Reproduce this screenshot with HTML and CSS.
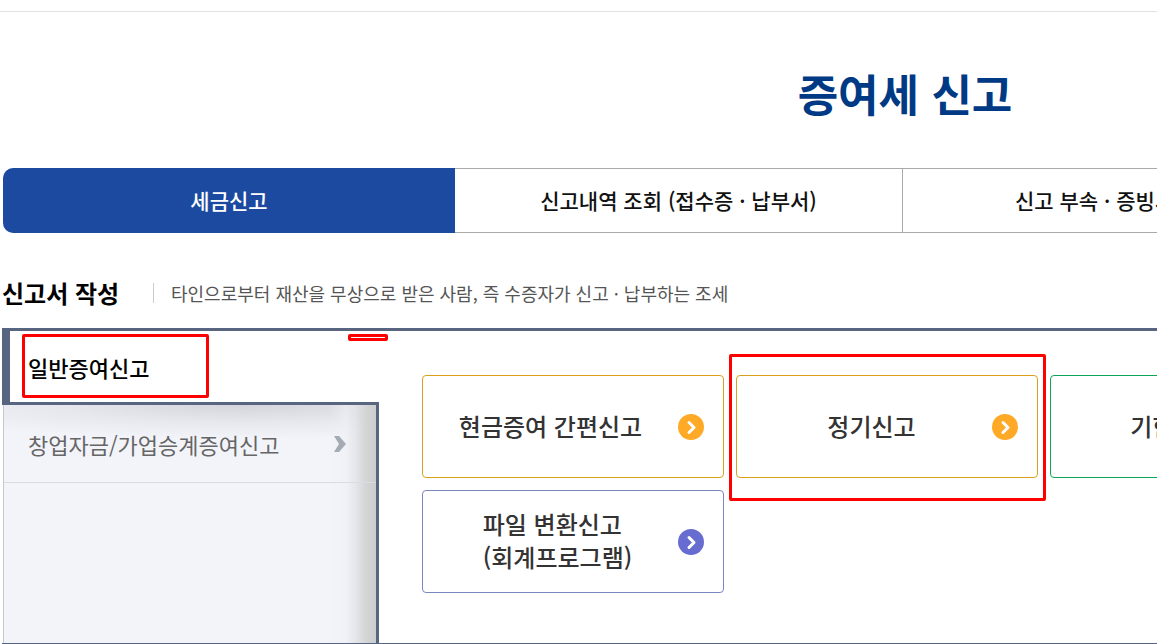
FILE: index.html
```
<!DOCTYPE html>
<html lang="ko">
<head>
<meta charset="UTF-8">
<title>증여세 신고</title>
<link rel="stylesheet" href="styles.css">
</head>
<body>

<div class="wrap">
	<h1 class="page-title">증여세 신고</h1>

	<nav class="tabs">
		<a href="#" class="tab active">세금신고</a>
		<a href="#" class="tab">신고내역 조회 (접수증 · 납부서)</a>
		<a href="#" class="tab">신고 부속 · 증빙서류 제출</a>
	</nav>

	<div class="section-head">
		<h2>신고서 작성</h2>
		<p>타인으로부터 재산을 무상으로 받은 사람, 즉 수증자가 신고 · 납부하는 조세</p>
	</div>

	<div class="panel">
		<div class="side">
			<a href="#" class="side-item active">일반증여신고</a>
			<div class="side-rest">
				<a href="#" class="side-item">
					창업자금/가업승계증여신고
					<svg class="side-arrow" width="14" height="16" viewBox="0 0 14 16"><path d="M1 0h5l7 8-7 8H1l5-8z" fill="#a5abb5"/></svg>
				</a>
			</div>
			<span class="mark mark-side"></span>
			<span class="mark mark-small"></span>
		</div>

		<div class="cards">
			<button type="button" class="card orange">
				<span class="card-name">현금증여 간편신고</span>
				<svg class="card-arrow" viewBox="0 0 26 26"><circle cx="13" cy="13" r="13"/><path d="M11 8.5l5 5-5 5"/></svg>
			</button>
			<div class="card-box">
				<button type="button" class="card orange short">
					<span class="card-name">정기신고</span>
					<svg class="card-arrow" viewBox="0 0 26 26"><circle cx="13" cy="13" r="13"/><path d="M11 8.5l5 5-5 5"/></svg>
				</button>
				<span class="mark mark-card"></span>
			</div>
			<button type="button" class="card green short">
				<span class="card-name">기한후신고</span>
				<svg class="card-arrow" viewBox="0 0 26 26"><circle cx="13" cy="13" r="13"/><path d="M11 8.5l5 5-5 5"/></svg>
			</button>
			<button type="button" class="card purple short">
				<span class="card-name"><span class="lines">파일 변환신고<br>(회계프로그램)</span></span>
				<svg class="card-arrow" viewBox="0 0 26 26"><circle cx="13" cy="13" r="13"/><path d="M11 8.5l5 5-5 5"/></svg>
			</button>
		</div>
	</div>
</div>

</body>
</html>
```
FILE: styles.css
```
* {
	box-sizing: border-box;
}
html {
	overflow: hidden;
}
body {
	margin: 0;
	padding-top: 11px;
	background: #fff;
	font-family: "Noto Sans CJK KR", sans-serif;
	color: #000;
}
a {
	color: inherit;
	text-decoration: none;
}
.wrap {
	min-width: 1810px;
	padding: 0 2px;
	border-top: 1px solid #e2e2e2;
}
.page-title {
	margin: 0;
	padding-top: 49px;
	font-size: 44px;
	line-height: 64px;
	font-weight: 700;
	color: #003a85;
	text-align: center;
}

/* Tabs */
.tabs {
	display: flex;
	margin: 43px 1px 0;
}
.tab {
	display: flex;
	align-items: center;
	justify-content: center;
	width: 448px;
	height: 65px;
	padding-bottom: 2px;
	border: 1px solid #aaa;
	border-left: 0;
	font-size: 21px;
	font-weight: 500;
	color: #111;
}
.tab.active {
	width: 452px;
	border: 0;
	border-radius: 10px 0 0 10px;
	background: #1c4aa1;
	color: #fff;
}

.section-head {
	display: flex;
	align-items: center;
	height: 60px;
	margin-top: 30px;
}
.section-head h2 {
	width: 151px;
	margin: 0;
	padding-bottom: 2px;
	font-size: 24px;
	font-weight: 700;
}
.section-head p {
	margin: 0;
	padding-left: 17px;
	border-left: 1px solid #ccc;
	font-size: 18px;
	line-height: 20px;
	color: #555;
}

/* Panel with the side menu */
.panel {
	display: flex;
	min-height: 318px;
	margin-top: 5px;
	border: solid #586580;
	border-width: 3px 0;
}
.side {
	position: relative;
	display: flex;
	flex-direction: column;
	width: 377px;
}
.side-item {
	display: flex;
	align-items: center;
	justify-content: space-between;
	height: 78px;
	padding: 0 29px 0 24px;
	border-bottom: 1px solid #dcdce0;
	font-size: 22px;
	color: #666;
}
.side-item.active {
	height: 74px;
	padding-left: 18px;
	border-left: 8px solid #586580;
	border-bottom: 3px solid #586580;
	background: #fff;
	color: #000;
	font-weight: 500;
}
/* shadow falls from the open tab and from the content side */
.side-rest {
	flex: 1;
	margin-left: 1px;
	border-left: 1px solid #c8c8d0;
	border-right: 3px solid #586580;
	background:
		linear-gradient(to left, #cbcccc, #d3d4d5 10px, rgba(224, 226, 229, .8) 20px, rgba(238, 240, 244, .6) 30px, rgba(243, 244, 250, 0) 46px),
		radial-gradient(ellipse 380px 34px at 240px 0, rgba(0, 0, 0, .13), rgba(0, 0, 0, .05) 50%, rgba(0, 0, 0, 0)),
		#f3f4fa;
}

/* Cards */
.cards {
	display: grid;
	grid-template-columns: repeat(3, 302px);
	grid-auto-rows: 103px;
	align-content: start;
	gap: 12px;
	padding: 44px 0 50px 43px;
}
.card-box {
	position: relative;
	display: grid;
}
.card {
	display: flex;
	align-items: center;
	padding: 0 19px 0 0;
	border: 1px solid;
	border-radius: 4px;
	background: #fff;
	font-family: inherit;
	font-size: 24px;
	line-height: 33px;
	font-weight: 500;
}
.card-name {
	flex: 1;
	padding-bottom: 3px;
	text-align: center;
	color: #333;
}
.short .card-name {
	padding-left: 14px;
}
.lines {
	display: inline-block;
	text-align: left;
}
.card-arrow {
	width: 26px;
	height: 26px;
}
.card-arrow path {
	fill: none;
	stroke: #fff;
	stroke-width: 3;
	stroke-linecap: round;
	stroke-linejoin: round;
}
.orange {
	border-color: #d9a01e;
}
.orange circle {
	fill: #ffaa26;
}
.green {
	border-color: #0ba65a;
}
.green circle {
	fill: #0ba65a;
}
.purple {
	border-color: #7a86c0;
}
.purple circle {
	fill: #676dd0;
}

/* Red marks */
.mark {
	position: absolute;
	border: 3px solid #f00;
	border-radius: 2px;
	pointer-events: none;
}
.mark-side {
	top: 3px;
	left: 20px;
	width: 187px;
	height: 64px;
}
.mark-small {
	top: 3px;
	right: -9px;
	width: 40px;
	height: 7px;
}
.mark-card {
	top: -21px;
	right: -8px;
	bottom: -23px;
	left: -7px;
}
```
